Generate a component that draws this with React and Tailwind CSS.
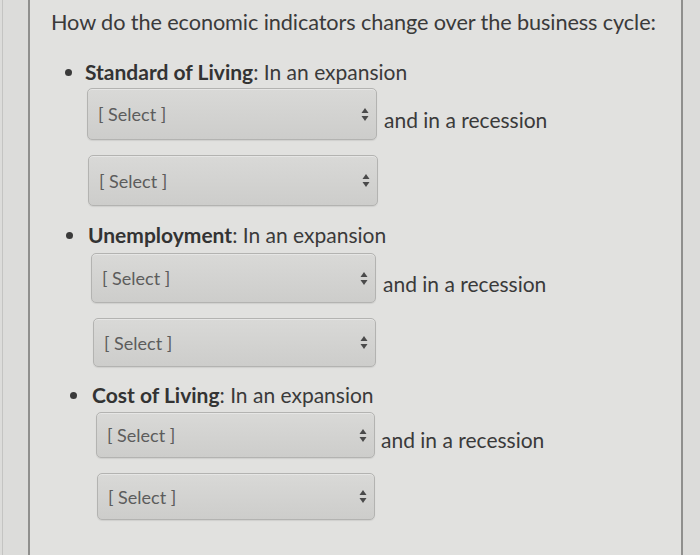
import React from "react";

function Arrows() {
  return (
    <svg width="8" height="15" viewBox="0 0 8 15" className="shrink-0">
      <path d="M4 1 L7.5 6 L0.5 6 Z" fill="#4a4a4a" />
      <path d="M4 14 L7.5 9 L0.5 9 Z" fill="#4a4a4a" />
    </svg>
  );
}

function Select({ cls }) {
  return (
    <div
      className={
        "flex items-center justify-between rounded-[5px] border border-[#b3b3b1] bg-gradient-to-b from-[#d9d9d7] to-[#cdcdcb] pl-[10px] pr-[7px] shadow-[inset_0_1px_0_rgba(255,255,255,0.35),0_1px_1px_rgba(0,0,0,0.08)] " +
        cls
      }
    >
      <span className="text-[18px] leading-[22px] text-[#5c5c5c]">[ Select ]</span>
      <Arrows />
    </div>
  );
}

function Bullet({ dotCls, textCls, label }) {
  return (
    <div className="flex items-center h-[26px]">
      <span className={"block w-[7px] h-[7px] rounded-full bg-[#3a3a3a] " + dotCls} />
      <span className={"text-[21px] leading-[26px] text-[#3a3a3a] whitespace-nowrap " + textCls}>
        <b className="font-bold text-[#333]">{label}</b>: In an expansion
      </span>
    </div>
  );
}

export default function App() {
  return (
    <div
      className="w-[700px] h-[555px] overflow-hidden bg-[#dcdcda] flex"
      style={{ fontFamily: "Lato, 'Open Sans', sans-serif" }}
    >
      <div className="ml-[2px] w-[1px] h-full bg-[#c4c4c2]" />
      <div className="ml-[25px] w-[655px] h-full border-l-2 border-r-2 border-[#8f8f8d] bg-[#e1e1df] pl-[21px] pt-[8px]">
        <div className="text-[21.7px] leading-[28px] text-[#3a3a3a] whitespace-nowrap tracking-[-0.1px]">
          How do the economic indicators change over the business cycle:
        </div>

        {/* Item 1 */}
        <div className="mt-[23px]">
          <Bullet dotCls="ml-[14px]" textCls="ml-[13px]" label="Standard of Living" />
          <div className="flex items-start mt-[3px] ml-[36px]">
            <Select cls="w-[290px] h-[52px]" />
            <span className="ml-[7px] mt-[19px] text-[21px] leading-[26px] text-[#3a3a3a] whitespace-nowrap">
              and in a recession
            </span>
          </div>
          <Select cls="w-[290px] h-[51px] mt-[15px] ml-[37px]" />
        </div>

        {/* Item 2 */}
        <div className="mt-[16px]">
          <Bullet dotCls="ml-[15px]" textCls="ml-[15px]" label="Unemployment" />
          <div className="flex items-start mt-[5px] ml-[40px]">
            <Select cls="w-[285px] h-[50px]" />
            <span className="ml-[7px] mt-[18px] text-[21px] leading-[26px] text-[#3a3a3a] whitespace-nowrap">
              and in a recession
            </span>
          </div>
          <Select cls="w-[283px] h-[49px] mt-[15px] ml-[42px]" />
        </div>

        {/* Item 3 */}
        <div className="mt-[15px]">
          <Bullet dotCls="ml-[19px]" textCls="ml-[15px]" label="Cost of Living" />
          <div className="flex items-start mt-[4px] ml-[45px]">
            <Select cls="w-[279px] h-[46px]" />
            <span className="ml-[6px] mt-[15px] text-[21px] leading-[26px] text-[#3a3a3a] whitespace-nowrap">
              and in a recession
            </span>
          </div>
          <Select cls="w-[278px] h-[47px] mt-[15px] ml-[46px]" />
        </div>
      </div>
    </div>
  );
}
